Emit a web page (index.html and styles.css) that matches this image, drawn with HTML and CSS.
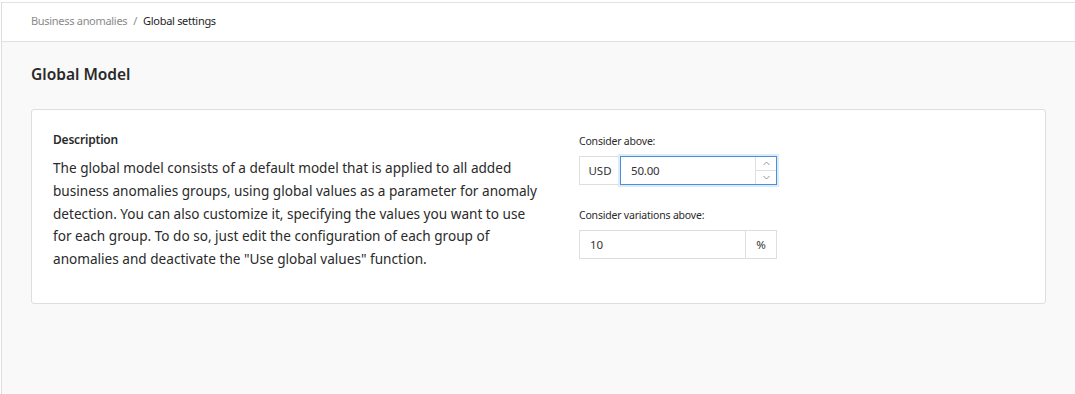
FILE: index.html
```html
<!DOCTYPE html>
<html>
<head>
<meta charset="utf-8">
<link rel="stylesheet" href="styles.css">
</head>
<body>
<div class="frame">
  <header class="topbar">
    <nav class="crumbs">
      <span class="crumb-link">Business anomalies</span>
      <span class="crumb-sep">/</span>
      <span class="crumb-current">Global settings</span>
    </nav>
  </header>
  <main class="content">
    <h1 class="page-title">Global Model</h1>
    <section class="card">
      <div class="desc">
        <h2 class="desc-title">Description</h2>
        <p class="desc-text">The global model consists of a default model that is applied to all added business anomalies groups, using global values as a parameter for anomaly detection. You can also customize it, specifying the values you want to use for each group. To do so, just edit the configuration of each group of anomalies and deactivate the "Use global values" function.</p>
      </div>
      <div class="fields">
        <div class="field">
          <label class="field-label">Consider above:</label>
          <div class="input-group">
            <span class="addon addon-left">USD</span>
            <div class="input focused">
              <span class="input-value">50.00</span>
              <span class="spinner">
                <span class="spin-btn"><svg width="7" height="5" viewBox="0 0 7 5"><path d="M0.5 4 L3.5 1 L6.5 4" fill="none" stroke="#8a8a8a" stroke-width="0.9"/></svg></span>
                <span class="spin-btn"><svg width="7" height="5" viewBox="0 0 7 5"><path d="M0.5 1 L3.5 4 L6.5 1" fill="none" stroke="#8a8a8a" stroke-width="0.9"/></svg></span>
              </span>
            </div>
          </div>
        </div>
        <div class="field">
          <label class="field-label">Consider variations above:</label>
          <div class="input-group">
            <div class="input">
              <span class="input-value">10</span>
            </div>
            <span class="addon addon-right">%</span>
          </div>
        </div>
      </div>
    </section>
  </main>
</div>
</body>
</html>
```

FILE: styles.css
```css
* { box-sizing: border-box; }
html, body { margin: 0; padding: 0; height: 100%; background: #ffffff; }
body {
  font-family: "Noto Sans", "Open Sans", sans-serif;
  color: #222;
}
.frame {
  margin: 2px 0 0 1px;
  border-top: 1px solid #e2e2e2;
  border-left: 1px solid #dcdcdc;
  min-height: calc(100% - 2px);
  background: #f9f9f9;
  display: flex;
  flex-direction: column;
}
.topbar {
  background: #fff;
  height: 39px;
  border-bottom: 1px solid #e2e2e2;
  display: flex;
  align-items: center;
  padding-left: 29px;
  padding-bottom: 4px;
}
.crumbs {
  font-size: 11px;
  letter-spacing: -0.3px;
  display: flex;
  align-items: center;
  gap: 5px;
}
.crumb-link { color: #8a8a8a; }
.crumb-sep { color: #8a8a8a; margin: 0 1px; }
.crumb-current { color: #1e1e1e; }
.content {
  padding: 20px 29px 40px 29px;
}
.page-title {
  margin: 0 0 23px 0;
  font-size: 15.5px;
  font-weight: 600;
  color: #2a2a2a;
  line-height: 24px;
}
.card {
  background: #fff;
  border: 1px solid #dedede;
  border-radius: 3px;
  display: flex;
  padding: 20px 22px 32px 21px;
  width: 1015px;
}
.desc { width: 485px; }
.desc-title {
  margin: 0 0 7px 0;
  font-size: 12px;
  letter-spacing: -0.2px;
  font-weight: 600;
  color: #2a2a2a;
  line-height: 20px;
}
.desc-text {
  margin: 0;
  font-size: 13.6px;
  line-height: 22.8px;
  color: #2a2a2a;
}
.fields {
  margin-left: 41px;
  padding-top: 1px;
  width: 198px;
  display: flex;
  flex-direction: column;
  gap: 20px;
}
.field-label {
  display: block;
  font-size: 10.5px;
  letter-spacing: -0.2px;
  color: #2a2a2a;
  line-height: 20px;
  margin-bottom: 5px;
}
.input-group {
  display: flex;
  height: 29px;
}
.addon {
  display: flex;
  align-items: center;
  justify-content: center;
  font-size: 11.5px;
  color: #333;
  border: 1px solid #dedede;
  background: #fff;
}
.addon-left { width: 41px; border-right: none; }
.addon-right { width: 31px; border-left: none; }
.input {
  flex: 1;
  display: flex;
  align-items: center;
  border: 1px solid #dedede;
  background: #fff;
  font-size: 11.5px;
  letter-spacing: -0.2px;
  color: #333;
  padding-left: 10px;
}
.input.focused {
  border-color: #4a90d9;
  box-shadow: 0 0 0 2px #dcebf8;
  position: relative;
  z-index: 1;
}
.input-value { flex: 1; }
.spinner {
  align-self: stretch;
  width: 21px;
  border-left: 1px solid #e0e0e0;
  display: flex;
  flex-direction: column;
}
.spin-btn {
  flex: 1;
  display: flex;
  align-items: center;
  justify-content: center;
}
.spin-btn + .spin-btn { border-top: 1px solid #e0e0e0; }
```
